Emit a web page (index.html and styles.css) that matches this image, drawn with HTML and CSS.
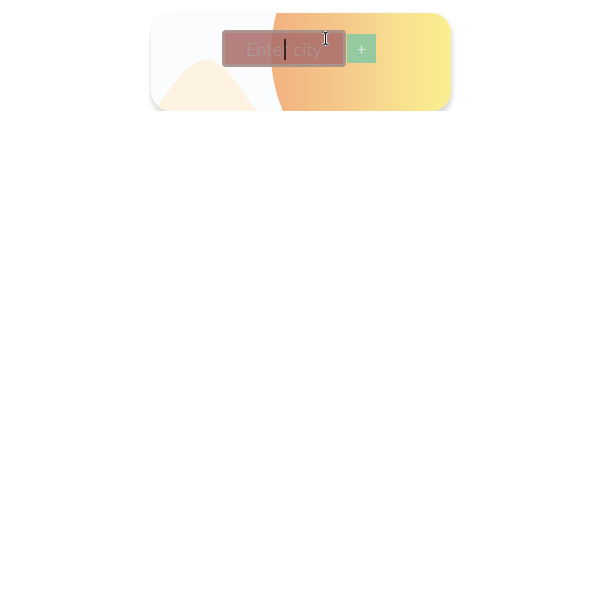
FILE: index.html
```html
<!DOCTYPE html>
<html>
<head>
<meta charset="utf-8">
<link rel="stylesheet" href="styles.css">
</head>
<body>
<div class="card">
  <div class="sun"></div>
  <svg class="hill" width="110" height="60" viewBox="0 0 110 60">
    <path d="M0 60 C 20 30, 35 8, 52 8 C 70 8, 82 30, 103 60 Z" fill="#fdf3e0"/>
  </svg>
  <form class="form">
    <div class="field">
      <input class="city" type="text" placeholder="Enter city">
      <span class="caret"></span>
    </div>
    <button class="add" type="button">+</button>
  </form>
  <svg class="pointer" width="9" height="15" viewBox="0 0 9 15">
    <path d="M1 1 H3 L4.5 2.5 L6 1 H8 M4.5 2.5 V12.5 M1 14 H3 L4.5 12.5 L6 14 H8" fill="none" stroke="#fff" stroke-width="3"/>
    <path d="M1 1 H3 L4.5 2.5 L6 1 H8 M4.5 2.5 V12.5 M1 14 H3 L4.5 12.5 L6 14 H8" fill="none" stroke="#111" stroke-width="1.2"/>
  </svg>
</div>
</body>
</html>
```
FILE: styles.css
```css
html, body {
  margin: 0;
  padding: 0;
  background: #ffffff;
}
.card {
  position: relative;
  width: 300px;
  height: 98px;
  margin: 13px 0 0 151px;
  border-radius: 20px;
  overflow: hidden;
  background: #fbfcfd;
  box-shadow: 0 6px 4px rgba(0, 0, 0, 0.11), 3px 3px 6px rgba(0, 0, 0, 0.06), 0 0 3px rgba(0, 0, 0, 0.05);
}
.sun {
  position: absolute;
  left: 120px;
  top: -108px;
  width: 296px;
  height: 296px;
  border-radius: 50%;
  background: linear-gradient(90deg, #f2b280 0%, #f5c98a 25%, #f8df8f 42%, #faf091 62%, #fbf692 100%);
}
.hill {
  position: absolute;
  left: 3px;
  top: 39px;
}
.form {
  position: relative;
  display: flex;
  align-items: center;
  gap: 1px;
  margin: 0;
  padding: 17px 0 0 71px;
}
.field {
  position: relative;
  width: 124px;
  height: 37px;
}
.city {
  box-sizing: border-box;
  width: 124px;
  height: 37px;
  margin: 0;
  padding: 0;
  border: 3px solid rgba(165, 158, 150, 0.7);
  border-radius: 4px;
  background: rgba(170, 110, 108, 0.87);
  font-family: "Lato", sans-serif;
  font-weight: 300;
  font-size: 18px;
  letter-spacing: 0.2px;
  text-align: center;
  color: #aaa09e;
  outline: none;
}
.city::placeholder {
  color: #aaa09e;
  opacity: 1;
}
.caret {
  position: absolute;
  left: 62px;
  top: 9px;
  width: 2px;
  height: 21px;
  background: #3a2320;
}
.add {
  width: 29px;
  height: 29px;
  margin: 0;
  padding: 0;
  border: none;
  background: #95c9a0;
  color: #ffffff;
  font-family: "Lato", sans-serif;
  font-weight: 300;
  font-size: 17px;
  line-height: 29px;
}
.pointer {
  position: absolute;
  left: 170px;
  top: 18px;
}
```
